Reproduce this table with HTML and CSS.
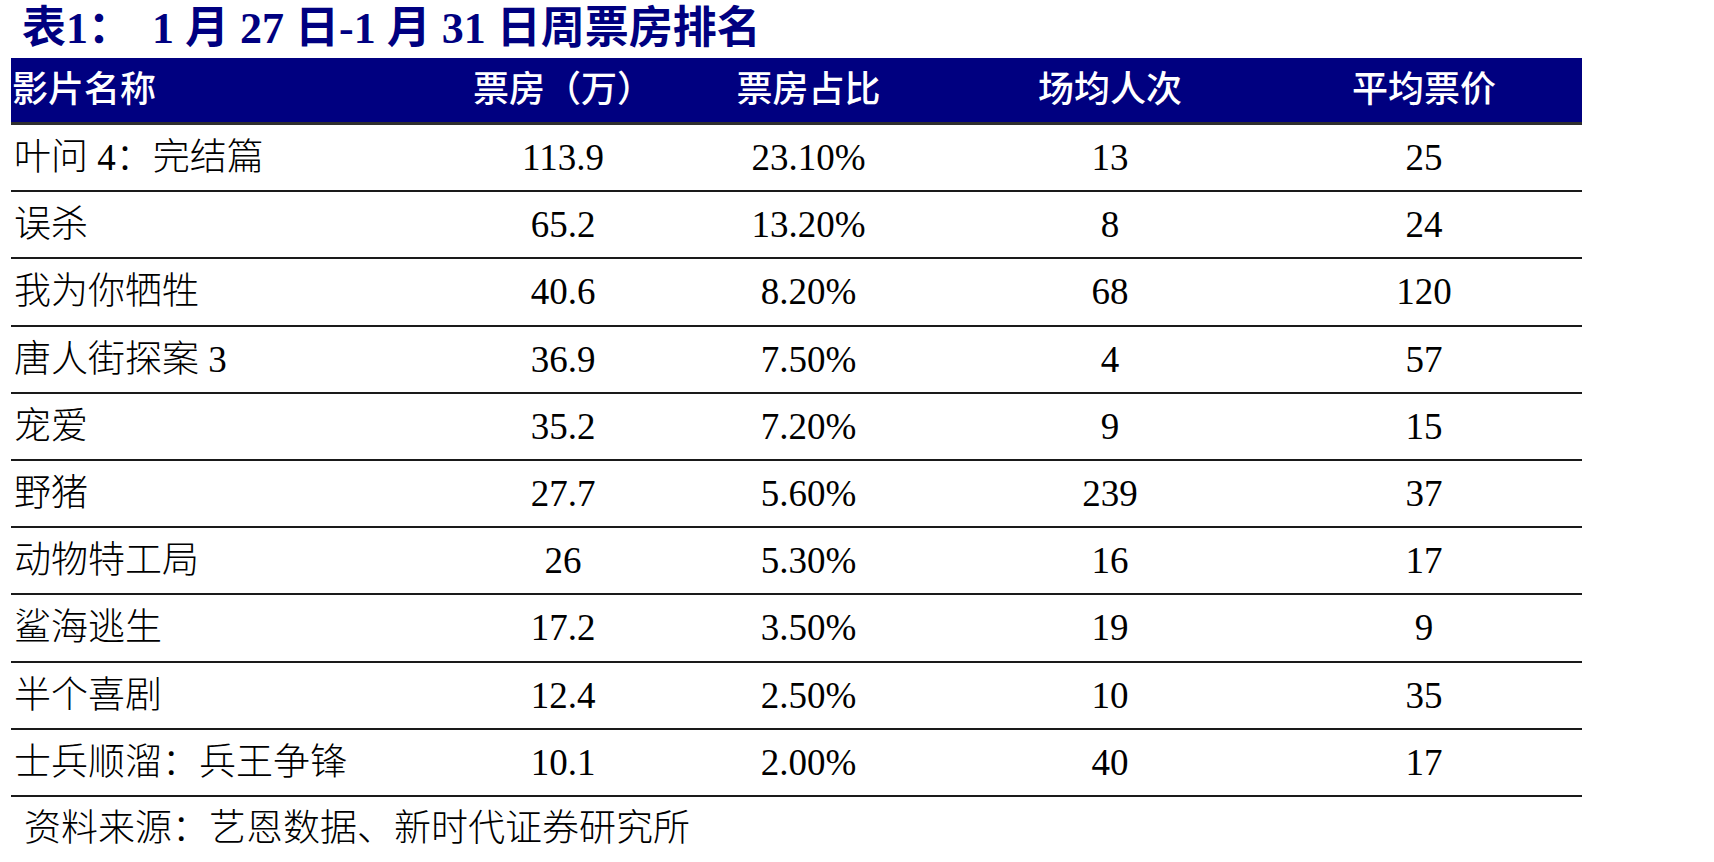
FILE: index.html
```html
<!DOCTYPE html>
<html lang="zh-CN">
<head>
<meta charset="utf-8">
<title>表1 周票房排名</title>
<link rel="stylesheet" href="styles.css">
</head>
<body>
<div class="page">
  <h1 class="title"><span class="title-no">表1：</span><span class="title-text">1 月 27 日-1 月 31 日周票房排名</span></h1>
  <table class="box-table">
    <colgroup>
      <col class="c-name">
      <col class="c-box">
      <col class="c-share">
      <col class="c-avg">
      <col class="c-price">
    </colgroup>
    <thead>
      <tr>
        <th class="left">影片名称</th>
        <th>票房（万）</th>
        <th>票房占比</th>
        <th>场均人次</th>
        <th>平均票价</th>
      </tr>
    </thead>
    <tbody>
      <tr><td class="left">叶问 4：完结篇</td><td>113.9</td><td>23.10%</td><td>13</td><td>25</td></tr>
      <tr><td class="left">误杀</td><td>65.2</td><td>13.20%</td><td>8</td><td>24</td></tr>
      <tr><td class="left">我为你牺牲</td><td>40.6</td><td>8.20%</td><td>68</td><td>120</td></tr>
      <tr><td class="left">唐人街探案 3</td><td>36.9</td><td>7.50%</td><td>4</td><td>57</td></tr>
      <tr><td class="left">宠爱</td><td>35.2</td><td>7.20%</td><td>9</td><td>15</td></tr>
      <tr><td class="left">野猪</td><td>27.7</td><td>5.60%</td><td>239</td><td>37</td></tr>
      <tr><td class="left">动物特工局</td><td>26</td><td>5.30%</td><td>16</td><td>17</td></tr>
      <tr><td class="left">鲨海逃生</td><td>17.2</td><td>3.50%</td><td>19</td><td>9</td></tr>
      <tr><td class="left">半个喜剧</td><td>12.4</td><td>2.50%</td><td>10</td><td>35</td></tr>
      <tr><td class="left">士兵顺溜：兵王争锋</td><td>10.1</td><td>2.00%</td><td>40</td><td>17</td></tr>
    </tbody>
  </table>
  <p class="source">资料来源：艺恩数据、新时代证券研究所</p>
</div>
</body>
</html>
```

FILE: styles.css
```css
html, body {
  margin: 0;
  padding: 0;
  background: #ffffff;
}

.page {
  padding-left: 11px;
  width: 1571px;
}

.title {
  margin: 0;
  height: 58px;
  line-height: 58px;
  padding-left: 11px;
  font-family: "Liberation Serif", "Noto Sans CJK SC", serif;
  font-size: 44px;
  font-weight: bold;
  color: #000080;
  white-space: pre;
}

.title-no {
  margin-right: 20px;
}

.box-table {
  width: 1571px;
  border-collapse: collapse;
  table-layout: fixed;
  font-family: "Liberation Serif", "Noto Sans CJK SC", serif;
}

.c-name { width: 452px; }
.c-box { width: 200px; }
.c-share { width: 291px; }
.c-avg { width: 312px; }
.c-price { width: 316px; }

.box-table th {
  height: 64px;
  padding: 0;
  background: #000080;
  color: #ffffff;
  font-size: 36px;
  font-weight: 500;
  text-align: center;
  line-height: 64px;
  border-bottom: 3px solid #2e2e2e;
  white-space: nowrap;
}

.box-table td {
  height: 65.2px;
  padding: 0;
  font-size: 37px;
  font-weight: 300;
  color: #000000;
  text-align: center;
  line-height: 65px;
  border-bottom: 2px solid #1a1a1a;
  white-space: nowrap;
}

.box-table th.left {
  text-align: left;
  padding-left: 1px;
}

.box-table td.left {
  text-align: left;
  padding-left: 3px;
}

.source {
  margin: 10px 0 0 13px;
  font-family: "Liberation Serif", "Noto Sans CJK SC", serif;
  font-size: 37px;
  font-weight: 300;
  line-height: 44px;
  color: #000000;
}
```
